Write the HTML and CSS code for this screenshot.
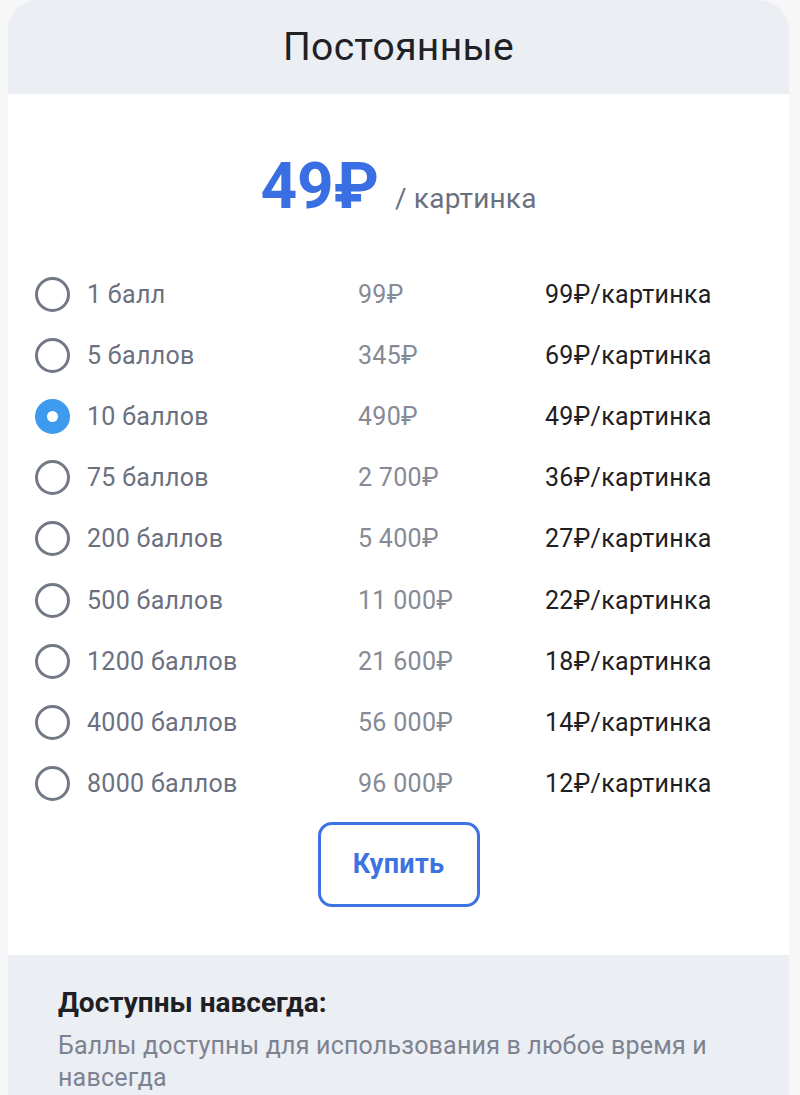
FILE: index.html
```html
<!DOCTYPE html>
<html lang="ru">
<head>
    <meta charset="UTF-8">
    <meta name="viewport" content="width=device-width, initial-scale=1.0">
    <title>Постоянные</title>
    <link rel="stylesheet" href="styles.css">
</head>
<body>
    <div class="card">
        <div class="card-header">Постоянные</div>
        <div class="card-body">
            <div class="price">
                <span class="price-value">49₽</span>
                <span class="price-unit">/ картинка</span>
            </div>
            <div class="plans">
                <label class="plan"><span class="radio"></span><span class="plan-name">1 балл</span><span class="plan-total">99₽</span><span class="plan-each">99₽/картинка</span></label>
                <label class="plan"><span class="radio"></span><span class="plan-name">5 баллов</span><span class="plan-total">345₽</span><span class="plan-each">69₽/картинка</span></label>
                <label class="plan"><span class="radio checked"></span><span class="plan-name">10 баллов</span><span class="plan-total">490₽</span><span class="plan-each">49₽/картинка</span></label>
                <label class="plan"><span class="radio"></span><span class="plan-name">75 баллов</span><span class="plan-total">2 700₽</span><span class="plan-each">36₽/картинка</span></label>
                <label class="plan"><span class="radio"></span><span class="plan-name">200 баллов</span><span class="plan-total">5 400₽</span><span class="plan-each">27₽/картинка</span></label>
                <label class="plan"><span class="radio"></span><span class="plan-name">500 баллов</span><span class="plan-total">11 000₽</span><span class="plan-each">22₽/картинка</span></label>
                <label class="plan"><span class="radio"></span><span class="plan-name">1200 баллов</span><span class="plan-total">21 600₽</span><span class="plan-each">18₽/картинка</span></label>
                <label class="plan"><span class="radio"></span><span class="plan-name">4000 баллов</span><span class="plan-total">56 000₽</span><span class="plan-each">14₽/картинка</span></label>
                <label class="plan"><span class="radio"></span><span class="plan-name">8000 баллов</span><span class="plan-total">96 000₽</span><span class="plan-each">12₽/картинка</span></label>
            </div>
            <div class="actions">
                <button class="buy">Купить</button>
            </div>
        </div>
        <div class="card-footer">
            <div class="footer-title">Доступны навсегда:</div>
            <div class="footer-text">Баллы доступны для использования в любое время и навсегда</div>
        </div>
    </div>
</body>
</html>
```

FILE: styles.css
```css
body {
    margin: 0;
    padding: 0 11px 0 8px;
    background-color: #f7f7f8;
    font-family: Roboto, "Noto Sans", sans-serif;
}
.card {
    background-color: white;
    border-radius: 30px 30px 0 0;
    overflow: hidden;
}
.card-header {
    background-color: #ebeef3;
    height: 94px;
    display: flex;
    align-items: center;
    justify-content: center;
    font-size: 39px;
    letter-spacing: 0.3px;
    color: #1f2126;
}
.card-body {
    padding: 0 0 48px;
}
.price {
    display: flex;
    align-items: baseline;
    justify-content: center;
    gap: 16px;
    padding: 61px 0 45px;
}
.price-value {
    font-size: 64px;
    font-weight: 700;
    color: #3a6fe4;
    line-height: 1;
}
.price-unit {
    font-size: 28px;
    letter-spacing: 0.2px;
    color: #6b7080;
}
.plans {
    display: flex;
    flex-direction: column;
}
.plan {
    display: grid;
    grid-template-columns: 35px 288px 187px 1fr;
    align-items: center;
    height: 61.1px;
    padding-left: 27px;
    font-size: 25px;
    letter-spacing: 0.3px;
}
.radio {
    width: 35px;
    height: 35px;
    box-sizing: border-box;
    border: 3px solid #737886;
    border-radius: 50%;
}
.radio.checked {
    border: 12px solid #3d9aec;
    background-color: white;
}
.plan-name {
    padding-left: 17px;
    color: #6b7080;
}
.plan-total {
    color: #858a96;
}
.plan-each {
    color: #1e2024;
}
.actions {
    display: flex;
    justify-content: center;
    margin-top: 8px;
}
.buy {
    width: 162px;
    height: 85px;
    border: 3px solid #3c72e2;
    border-radius: 14px;
    background-color: white;
    color: #3c72e2;
    font-family: Roboto, "Noto Sans", sans-serif;
    font-size: 27px;
    font-weight: 700;
    letter-spacing: 0.3px;
}
.card-footer {
    background-color: #ebeef3;
    padding: 31px 50px 20px;
}
.footer-title {
    font-size: 28px;
    font-weight: 700;
    color: #1e2024;
    margin-bottom: 11px;
}
.footer-text {
    font-size: 25px;
    line-height: 32px;
    letter-spacing: 0.2px;
    color: #7d8290;
}
```
